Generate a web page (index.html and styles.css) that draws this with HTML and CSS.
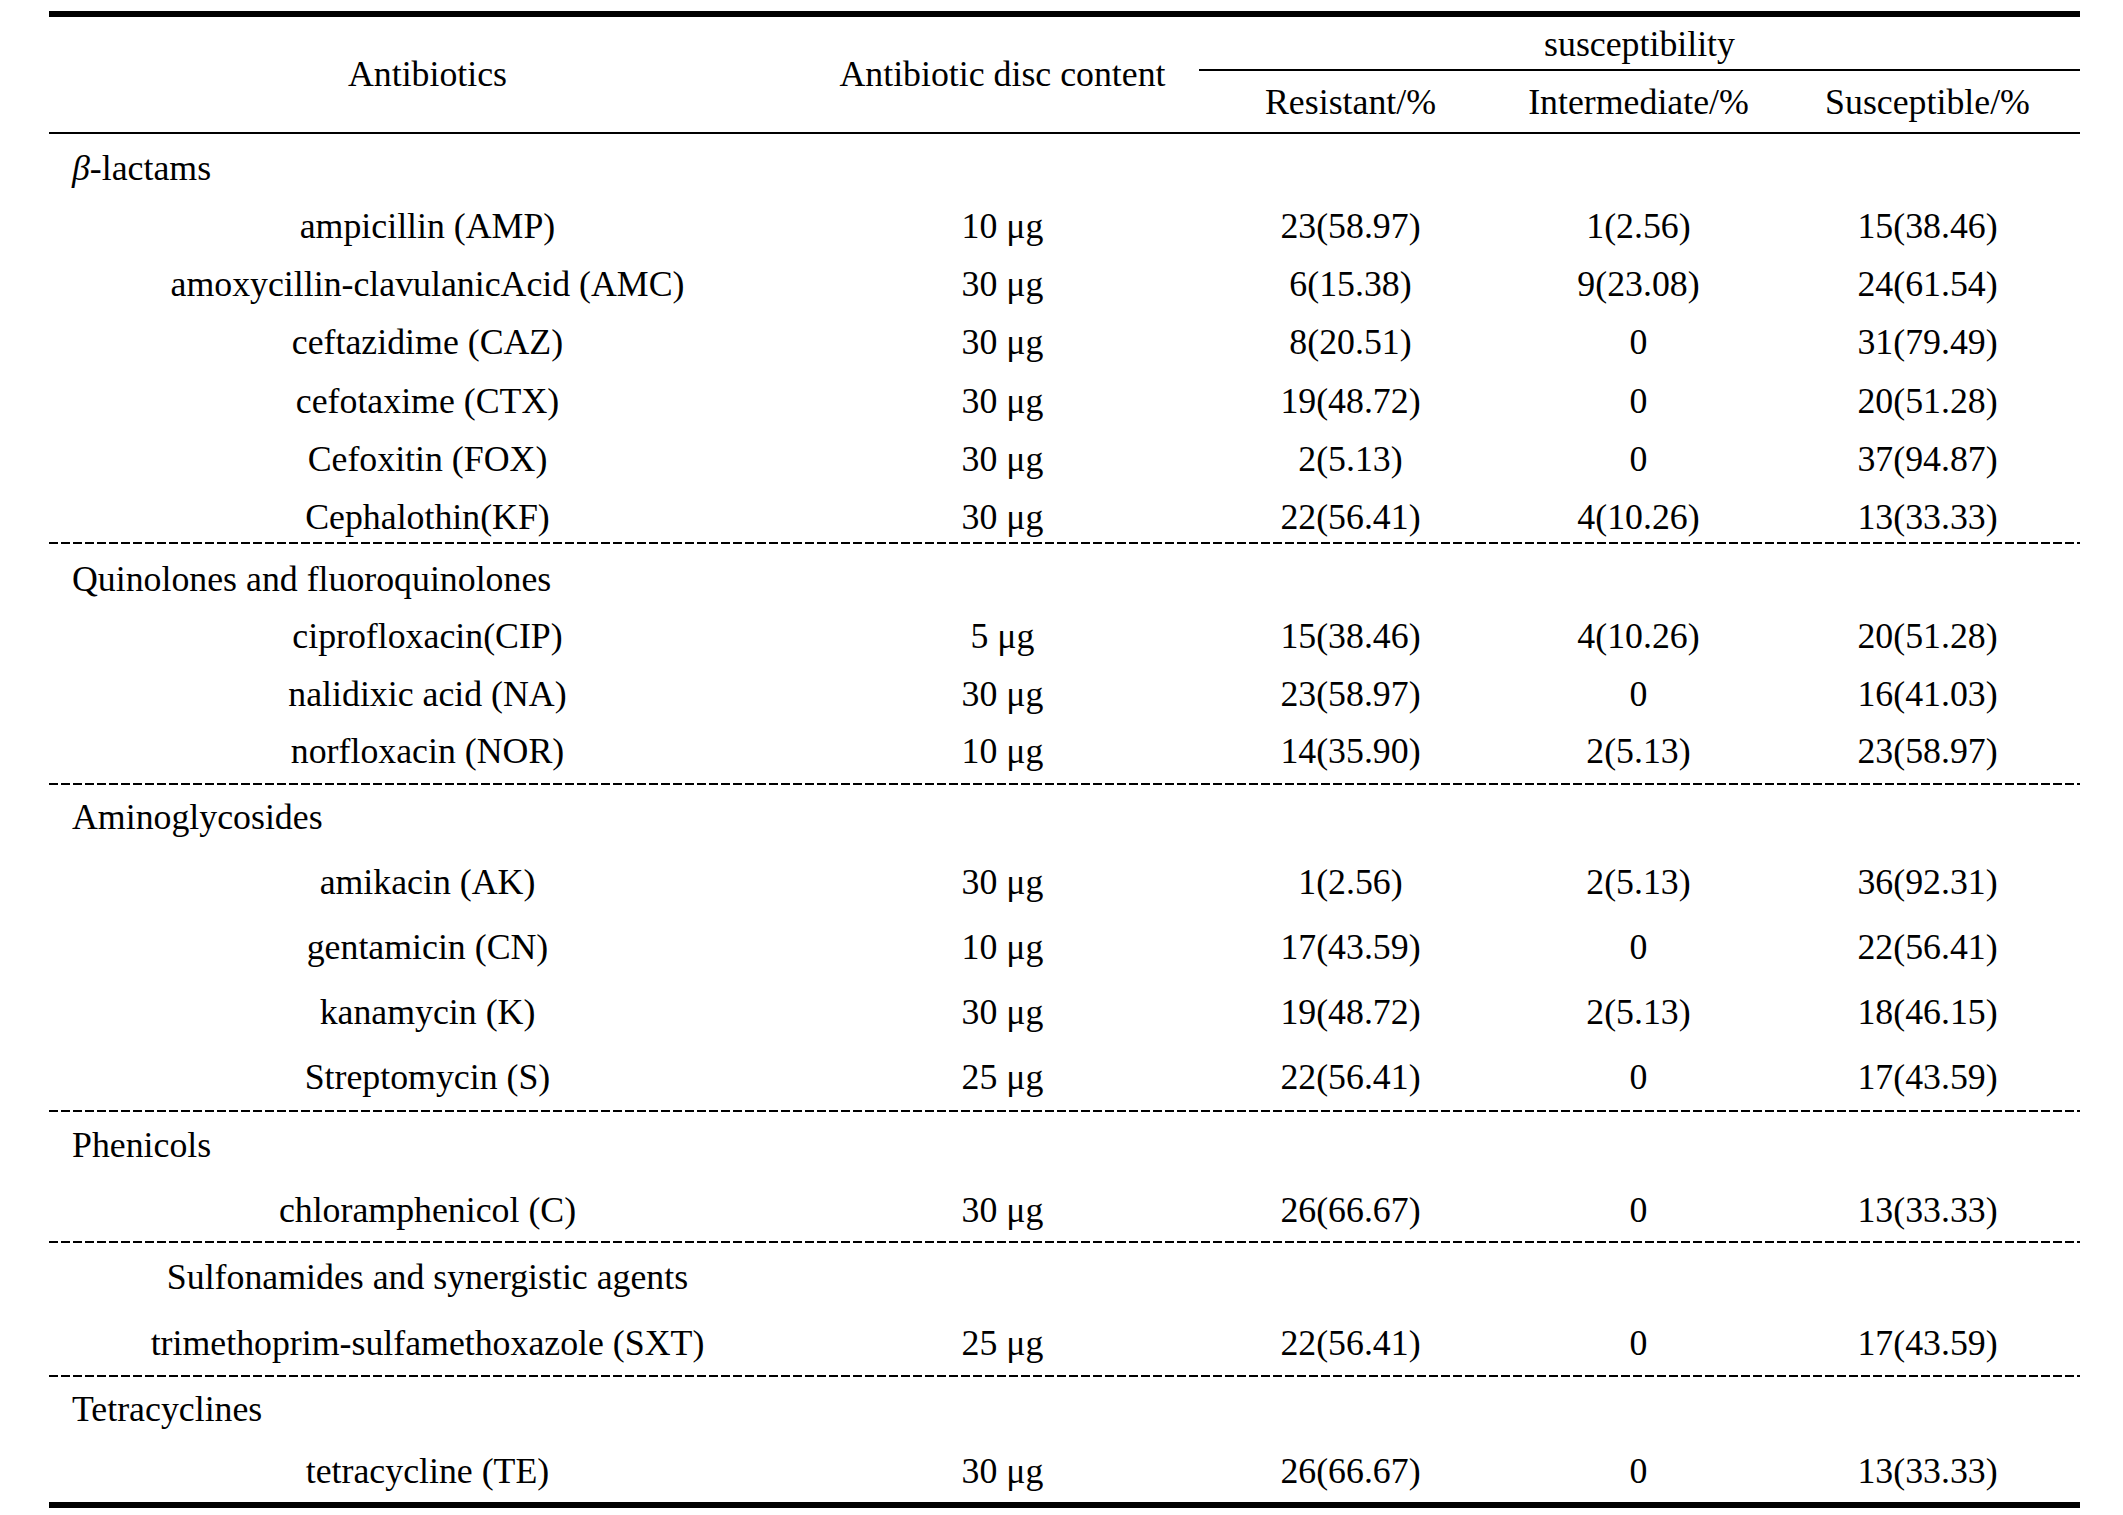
FILE: index.html
```html
<!DOCTYPE html>
<html lang="en">
<head>
<meta charset="utf-8">
<title>Antibiotic susceptibility</title>
<link rel="stylesheet" href="styles.css">
</head>
<body>
<table class="tbl">
  <colgroup>
    <col class="c-name">
    <col class="c-disc">
    <col class="c-res">
    <col class="c-int">
    <col class="c-sus">
  </colgroup>
  <thead>
    <tr class="h1">
      <th class="span" rowspan="2">Antibiotics</th>
      <th class="span" rowspan="2">Antibiotic disc content</th>
      <th class="sus" colspan="3">susceptibility</th>
    </tr>
    <tr class="h2">
      <th>Resistant/%</th>
      <th>Intermediate/%</th>
      <th>Susceptible/%</th>
    </tr>
  </thead>
  <tbody>
    <tr class="g1 cat"><td class="name"><i>β</i>-lactams</td><td></td><td></td><td></td><td></td></tr>
    <tr class="g1"><td>ampicillin (AMP)</td><td>10 μg</td><td>23(58.97)</td><td>1(2.56)</td><td>15(38.46)</td></tr>
    <tr class="g1"><td>amoxycillin-clavulanicAcid (AMC)</td><td>30 μg</td><td>6(15.38)</td><td>9(23.08)</td><td>24(61.54)</td></tr>
    <tr class="g1"><td>ceftazidime (CAZ)</td><td>30 μg</td><td>8(20.51)</td><td>0</td><td>31(79.49)</td></tr>
    <tr class="g1"><td>cefotaxime (CTX)</td><td>30 μg</td><td>19(48.72)</td><td>0</td><td>20(51.28)</td></tr>
    <tr class="g1"><td>Cefoxitin (FOX)</td><td>30 μg</td><td>2(5.13)</td><td>0</td><td>37(94.87)</td></tr>
    <tr class="g1"><td>Cephalothin(KF)</td><td>30 μg</td><td>22(56.41)</td><td>4(10.26)</td><td>13(33.33)</td></tr>
    <tr class="sep"><td colspan="5"></td></tr>

    <tr class="g2 cat"><td class="name">Quinolones and fluoroquinolones</td><td></td><td></td><td></td><td></td></tr>
    <tr class="g2"><td>ciprofloxacin(CIP)</td><td>5 μg</td><td>15(38.46)</td><td>4(10.26)</td><td>20(51.28)</td></tr>
    <tr class="g2"><td>nalidixic acid (NA)</td><td>30 μg</td><td>23(58.97)</td><td>0</td><td>16(41.03)</td></tr>
    <tr class="g2 end"><td>norfloxacin (NOR)</td><td>10 μg</td><td>14(35.90)</td><td>2(5.13)</td><td>23(58.97)</td></tr>
    <tr class="sep"><td colspan="5"></td></tr>

    <tr class="g4 cat"><td class="name">Aminoglycosides</td><td></td><td></td><td></td><td></td></tr>
    <tr class="g4"><td>amikacin (AK)</td><td>30 μg</td><td>1(2.56)</td><td>2(5.13)</td><td>36(92.31)</td></tr>
    <tr class="g4"><td>gentamicin (CN)</td><td>10 μg</td><td>17(43.59)</td><td>0</td><td>22(56.41)</td></tr>
    <tr class="g4"><td>kanamycin (K)</td><td>30 μg</td><td>19(48.72)</td><td>2(5.13)</td><td>18(46.15)</td></tr>
    <tr class="g4"><td>Streptomycin (S)</td><td>25 μg</td><td>22(56.41)</td><td>0</td><td>17(43.59)</td></tr>
    <tr class="sep"><td colspan="5"></td></tr>

    <tr class="g5 cat"><td class="name">Phenicols</td><td></td><td></td><td></td><td></td></tr>
    <tr class="g5"><td>chloramphenicol (C)</td><td>30 μg</td><td>26(66.67)</td><td>0</td><td>13(33.33)</td></tr>
    <tr class="sep"><td colspan="5"></td></tr>

    <tr class="g6 cat"><td class="name center">Sulfonamides and synergistic agents</td><td></td><td></td><td></td><td></td></tr>
    <tr class="g6"><td>trimethoprim-sulfamethoxazole (SXT)</td><td>25 μg</td><td>22(56.41)</td><td>0</td><td>17(43.59)</td></tr>
    <tr class="sep"><td colspan="5"></td></tr>

    <tr class="g7 cat"><td class="name">Tetracyclines</td><td></td><td></td><td></td><td></td></tr>
    <tr class="g7"><td>tetracycline (TE)</td><td>30 μg</td><td>26(66.67)</td><td>0</td><td>13(33.33)</td></tr>
  </tbody>
</table>
</body>
</html>
```

FILE: styles.css
```css
html, body {
  margin: 0;
  padding: 0;
  background: #ffffff;
}

body {
  font-family: "Liberation Serif", "Times New Roman", serif;
  font-size: 35.8px;
  color: #000000;
}

.tbl {
  margin: 11px 0 0 49px;
  width: 2031px;
  table-layout: fixed;
  border-collapse: separate;
  border-spacing: 0;
  border-top: 6px solid #000;
  border-bottom: 6px solid #000;
}

.c-name { width: 757px; }
.c-disc { width: 393px; }
.c-res  { width: 303px; }
.c-int  { width: 273px; }
.c-sus  { width: 305px; }

.tbl th,
.tbl td {
  padding: 0;
  line-height: 35px;
  text-align: center;
  font-weight: normal;
  white-space: nowrap;
  vertical-align: top;
}

.tbl th.span {
  vertical-align: middle;
  border-bottom: 2px solid #000;
}

.tbl th.sus {
  padding-top: 10px;
  padding-bottom: 7px;
  border-bottom: 2px solid #000;
}

.h2 th {
  padding-top: 14px;
  padding-bottom: 12px;
  border-bottom: 2px solid #000;
}

.cat td.name {
  text-align: left;
  padding-left: 23px;
}

.cat td.name.center {
  text-align: center;
  padding-left: 0;
}

.g1 td { padding-top: 16.5px; padding-bottom: 6.8px; }
.g2 td { padding-top: 18px; padding-bottom: 4.3px; }
.g2.end td { padding-top: 18px; padding-bottom: 13.7px; }
.g4 td { padding-top: 15.7px; padding-bottom: 14.3px; }
.g5 td { padding-top: 16.5px; padding-bottom: 13px; }
.g6 td { padding-top: 17.5px; padding-bottom: 13.5px; }
.g7 td { padding-top: 15.2px; padding-bottom: 12.3px; }

.sep td {
  height: 2px;
  padding: 0;
  line-height: 0;
  font-size: 0;
  background: repeating-linear-gradient(90deg, #000 0 9px, transparent 9px 12px);
}
```
